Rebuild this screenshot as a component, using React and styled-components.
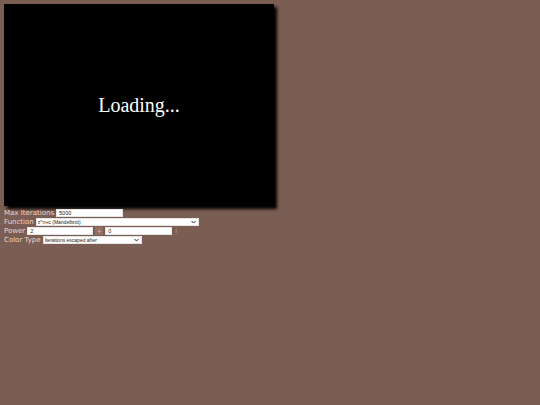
import React from 'react';
import styled, { createGlobalStyle } from 'styled-components';

const GlobalStyle = createGlobalStyle`
  html, body {
    margin: 0;
    background: #7b5e53;
  }
  body {
    padding: 4px;
    font-family: "DejaVu Sans", Verdana, sans-serif;
  }
`;

const Canvas = styled.div`
  width: 270px;
  height: 202px;
  background: #000;
  box-shadow: 3px 3px 3px #000;
  display: flex;
  align-items: center;
  justify-content: center;
`;

const Loading = styled.div`
  color: #fff;
  font-family: "Liberation Serif", serif;
  font-size: 20px;
`;

const Controls = styled.div`
  display: flex;
  flex-direction: column;
  gap: 1px;
  margin-top: 3px;
`;

const Row = styled.div`
  display: flex;
  align-items: center;
  gap: 2px;
  height: 8px;
`;

const Label = styled.span`
  color: #f3d2c4;
  font-size: 7px;
  line-height: 8px;
  white-space: nowrap;
`;

const Input = styled.input`
  box-sizing: border-box;
  width: ${p => p.$w}px;
  height: 8px;
  border: 1px solid #e4e4e4;
  background: #fff;
  padding: 0 2px;
  font-family: "Liberation Sans", Arial, sans-serif;
  font-size: 5.5px;
  color: #222;
  outline: none;
`;

const SelectWrap = styled.div`
  position: relative;
  flex: none;
  width: ${p => p.$w}px;
  height: 8px;
  font-size: 0;
  line-height: 0;
`;

const Select = styled.select`
  appearance: none;
  display: block;
  box-sizing: border-box;
  width: 100%;
  height: 8px;
  margin: 0;
  border: 1px solid #e4e4e4;
  border-radius: 0;
  background: #fff;
  padding: 0 1px;
  font-family: "Liberation Sans", Arial, sans-serif;
  font-size: 5px;
  line-height: 6px;
  color: #222;
  outline: none;
`;

const Chevron = styled.svg`
  position: absolute;
  right: 3px;
  top: 2px;
  width: 5px;
  height: 4px;
  pointer-events: none;
`;

const Plus = styled.span`
  box-sizing: border-box;
  width: 8px;
  height: 8px;
  background: #95705f;
  color: #d9b4a2;
  font-size: 6px;
  line-height: 8px;
  text-align: center;
`;

const Imag = styled.span`
  color: #c9a696;
  font-size: 6px;
  line-height: 8px;
  margin-left: 1px;
`;

const Dropdown = ({ w, children }) => (
  <SelectWrap $w={w}>
    <Select>{children}</Select>
    <Chevron viewBox="0 0 10 8">
      <path d="M1 2 L5 6 L9 2" fill="none" stroke="#222" strokeWidth="2" />
    </Chevron>
  </SelectWrap>
);

export default function App() {
  return (
    <>
      <GlobalStyle />
      <Canvas>
        <Loading>Loading...</Loading>
      </Canvas>
      <Controls>
        <Row>
          <Label>Max Iterations</Label>
          <Input $w={67} defaultValue="5000" />
        </Row>
        <Row>
          <Label>Function</Label>
          <Dropdown w={163}>
            <option>z^n+c (Mandelbrot)</option>
          </Dropdown>
        </Row>
        <Row>
          <Label>Power</Label>
          <Input $w={66} defaultValue="2" />
          <Plus>+</Plus>
          <Input $w={67} defaultValue="0" />
          <Imag>i</Imag>
        </Row>
        <Row>
          <Label>Color Type</Label>
          <Dropdown w={99}>
            <option>Iterations escaped after</option>
          </Dropdown>
        </Row>
      </Controls>
    </>
  );
}
